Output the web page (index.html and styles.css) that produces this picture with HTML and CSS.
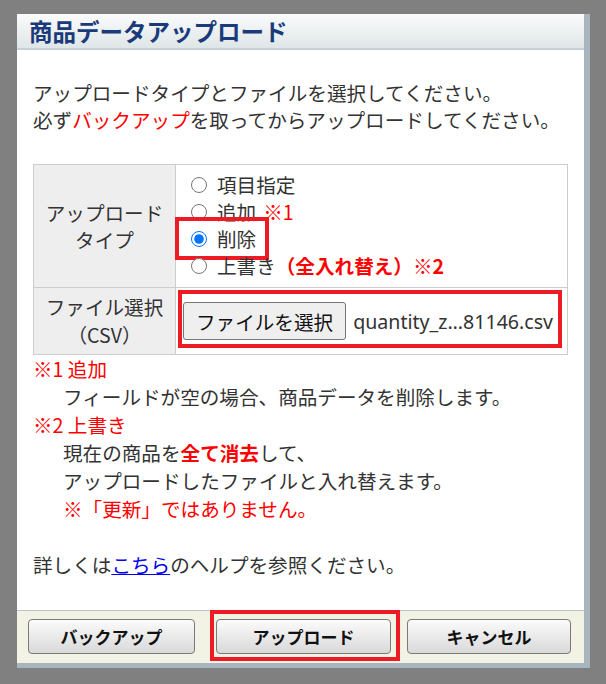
FILE: index.html
```html
<!DOCTYPE html>
<html lang="ja">
<head>
    <meta charset="UTF-8">
    <meta name="viewport" content="width=device-width, initial-scale=1.0">
    <title>商品データアップロード</title>
    <link rel="stylesheet" href="styles.css">
</head>
<body>
    <div class="upload-dialog">
        <div class="dialog-header">
            <h2>商品データアップロード</h2>
        </div>

        <div class="dialog-body">
            <p class="intro">
                アップロードタイプとファイルを選択してください。<br>
                必ず<span class="red">バックアップ</span>を取ってからアップロードしてください。
            </p>

            <table class="upload-table">
                <tr>
                    <th>アップロード<br>タイプ</th>
                    <td class="type-cell">
                        <div class="option">
                            <label><input type="radio" name="type" value="item">項目指定</label>
                        </div>
                        <div class="option">
                            <label><input type="radio" name="type" value="add">追加<span class="red mark">※1</span></label>
                        </div>
                        <div class="option">
                            <label class="highlight"><input type="radio" name="type" value="delete" checked>削除</label>
                        </div>
                        <div class="option">
                            <label><input type="radio" name="type" value="overwrite">上書き<strong class="red">（全入れ替え）※2</strong></label>
                        </div>
                    </td>
                </tr>
                <tr>
                    <th class="file-head">ファイル選択<br>（CSV）</th>
                    <td class="file-cell">
                        <div class="file-box">
                            <button type="button" class="file-button">ファイルを選択</button>
                            <span class="file-name">quantity_z…81146.csv</span>
                        </div>
                    </td>
                </tr>
            </table>

            <div class="notes">
                <p class="red">※1 追加</p>
                <p class="indent">フィールドが空の場合、商品データを削除します。</p>
                <p class="red">※2 上書き</p>
                <p class="indent">現在の商品を<strong class="red">全て消去</strong>して、</p>
                <p class="indent">アップロードしたファイルと入れ替えます。</p>
                <p class="indent red">※「更新」ではありません。</p>
            </div>

            <p class="help">詳しくは<a href="#">こちら</a>のヘルプを参照ください。</p>
        </div>

        <div class="dialog-footer">
            <button type="button" class="btn btn-backup">バックアップ</button>
            <span class="upload-frame">
                <button type="button" class="btn btn-upload">アップロード</button>
            </span>
            <button type="button" class="btn btn-cancel">キャンセル</button>
        </div>
    </div>
</body>
</html>
```

FILE: styles.css
```css
* {
    margin: 0;
    padding: 0;
    box-sizing: border-box;
}

body {
    font-family: "Noto Sans CJK JP", "Noto Sans", sans-serif;
    background: #808080;
    color: #333;
}

.red {
    color: #ff0000;
}

.upload-dialog {
    width: 573px;
    margin: 14px 0 0 17px;
    background: #fff;
    border-right: 6px solid #a9b5be;
    border-bottom: 5px solid #a9b5be;
}

.dialog-header {
    height: 36px;
    padding-left: 12px;
    background: linear-gradient(#fafbfb, #dfe6e8);
    border-bottom: 2px solid #c6d0d6;
}

.dialog-header h2 {
    font-size: 23.5px;
    font-weight: 700;
    line-height: 34px;
    color: #1b3a7a;
}

.dialog-body {
    padding: 29px 16px 31px;
    font-size: 19.6px;
}

.intro {
    line-height: 27px;
    margin-bottom: 31px;
}

.upload-table {
    width: 535px;
    border-collapse: collapse;
}

.upload-table th,
.upload-table td {
    border: 1px solid #cccccc;
}

.upload-table th {
    width: 142px;
    background: #eeeeee;
    font-weight: 400;
    line-height: 27px;
    text-align: center;
}

.upload-table .file-head {
    line-height: 28px;
}

.type-cell {
    padding: 6px 0 8px 12px;
}

.option {
    display: flex;
    align-items: center;
    height: 27px;
}

.option label {
    display: inline-flex;
    align-items: center;
    height: 27px;
}

.option input {
    width: 16px;
    height: 16px;
    margin: 0 10px 0 3px;
}

.option .mark {
    margin-left: 7px;
}

.option strong {
    font-weight: 700;
}

.option .highlight {
    padding: 0 5px;
    margin: 0 -5px;
    outline: 4px solid #ed1c24;
    outline-offset: 4px;
}

.file-cell {
    padding: 2px 5px 6px 2px;
}

.file-box {
    display: flex;
    align-items: center;
    height: 58px;
    padding: 4px 0 0 1px;
    border: 4px solid #ed1c24;
}

.file-button {
    height: 38px;
    padding: 0 12px;
    font-family: "Noto Sans CJK JP", sans-serif;
    font-size: 19.6px;
    color: #111;
    background: #efefef;
    border: 1px solid #767676;
    border-radius: 3px;
}

.file-name {
    margin-left: 7px;
    font-family: "Noto Sans", "Open Sans", sans-serif;
    font-size: 19.6px;
}

.notes {
    line-height: 28px;
}

.notes .indent {
    padding-left: 30px;
}

.notes strong {
    font-weight: 700;
}

.help {
    margin-top: 28px;
    line-height: 28px;
}

.help a {
    color: #0000ee;
}

.dialog-footer {
    display: flex;
    align-items: flex-start;
    height: 53px;
    padding: 8px 0 0 11px;
    background: #f3f3e5;
    border-top: 1px solid #b9c4cb;
}

.btn {
    height: 35px;
    font-family: "Noto Sans CJK JP", sans-serif;
    font-size: 17px;
    font-weight: 700;
    color: #111;
    background: linear-gradient(#fbfbfb, #d9d9d9);
    border: 1px solid #7a7a7a;
    border-radius: 4px;
    cursor: pointer;
}

.btn-backup {
    width: 167px;
}

.upload-frame {
    display: flex;
    margin: -9px 7px 0 15px;
    padding: 5px 5px 3px 2px;
    border: 4px solid #ed1c24;
}

.btn-upload {
    width: 175px;
}

.btn-cancel {
    width: 164px;
}
```
